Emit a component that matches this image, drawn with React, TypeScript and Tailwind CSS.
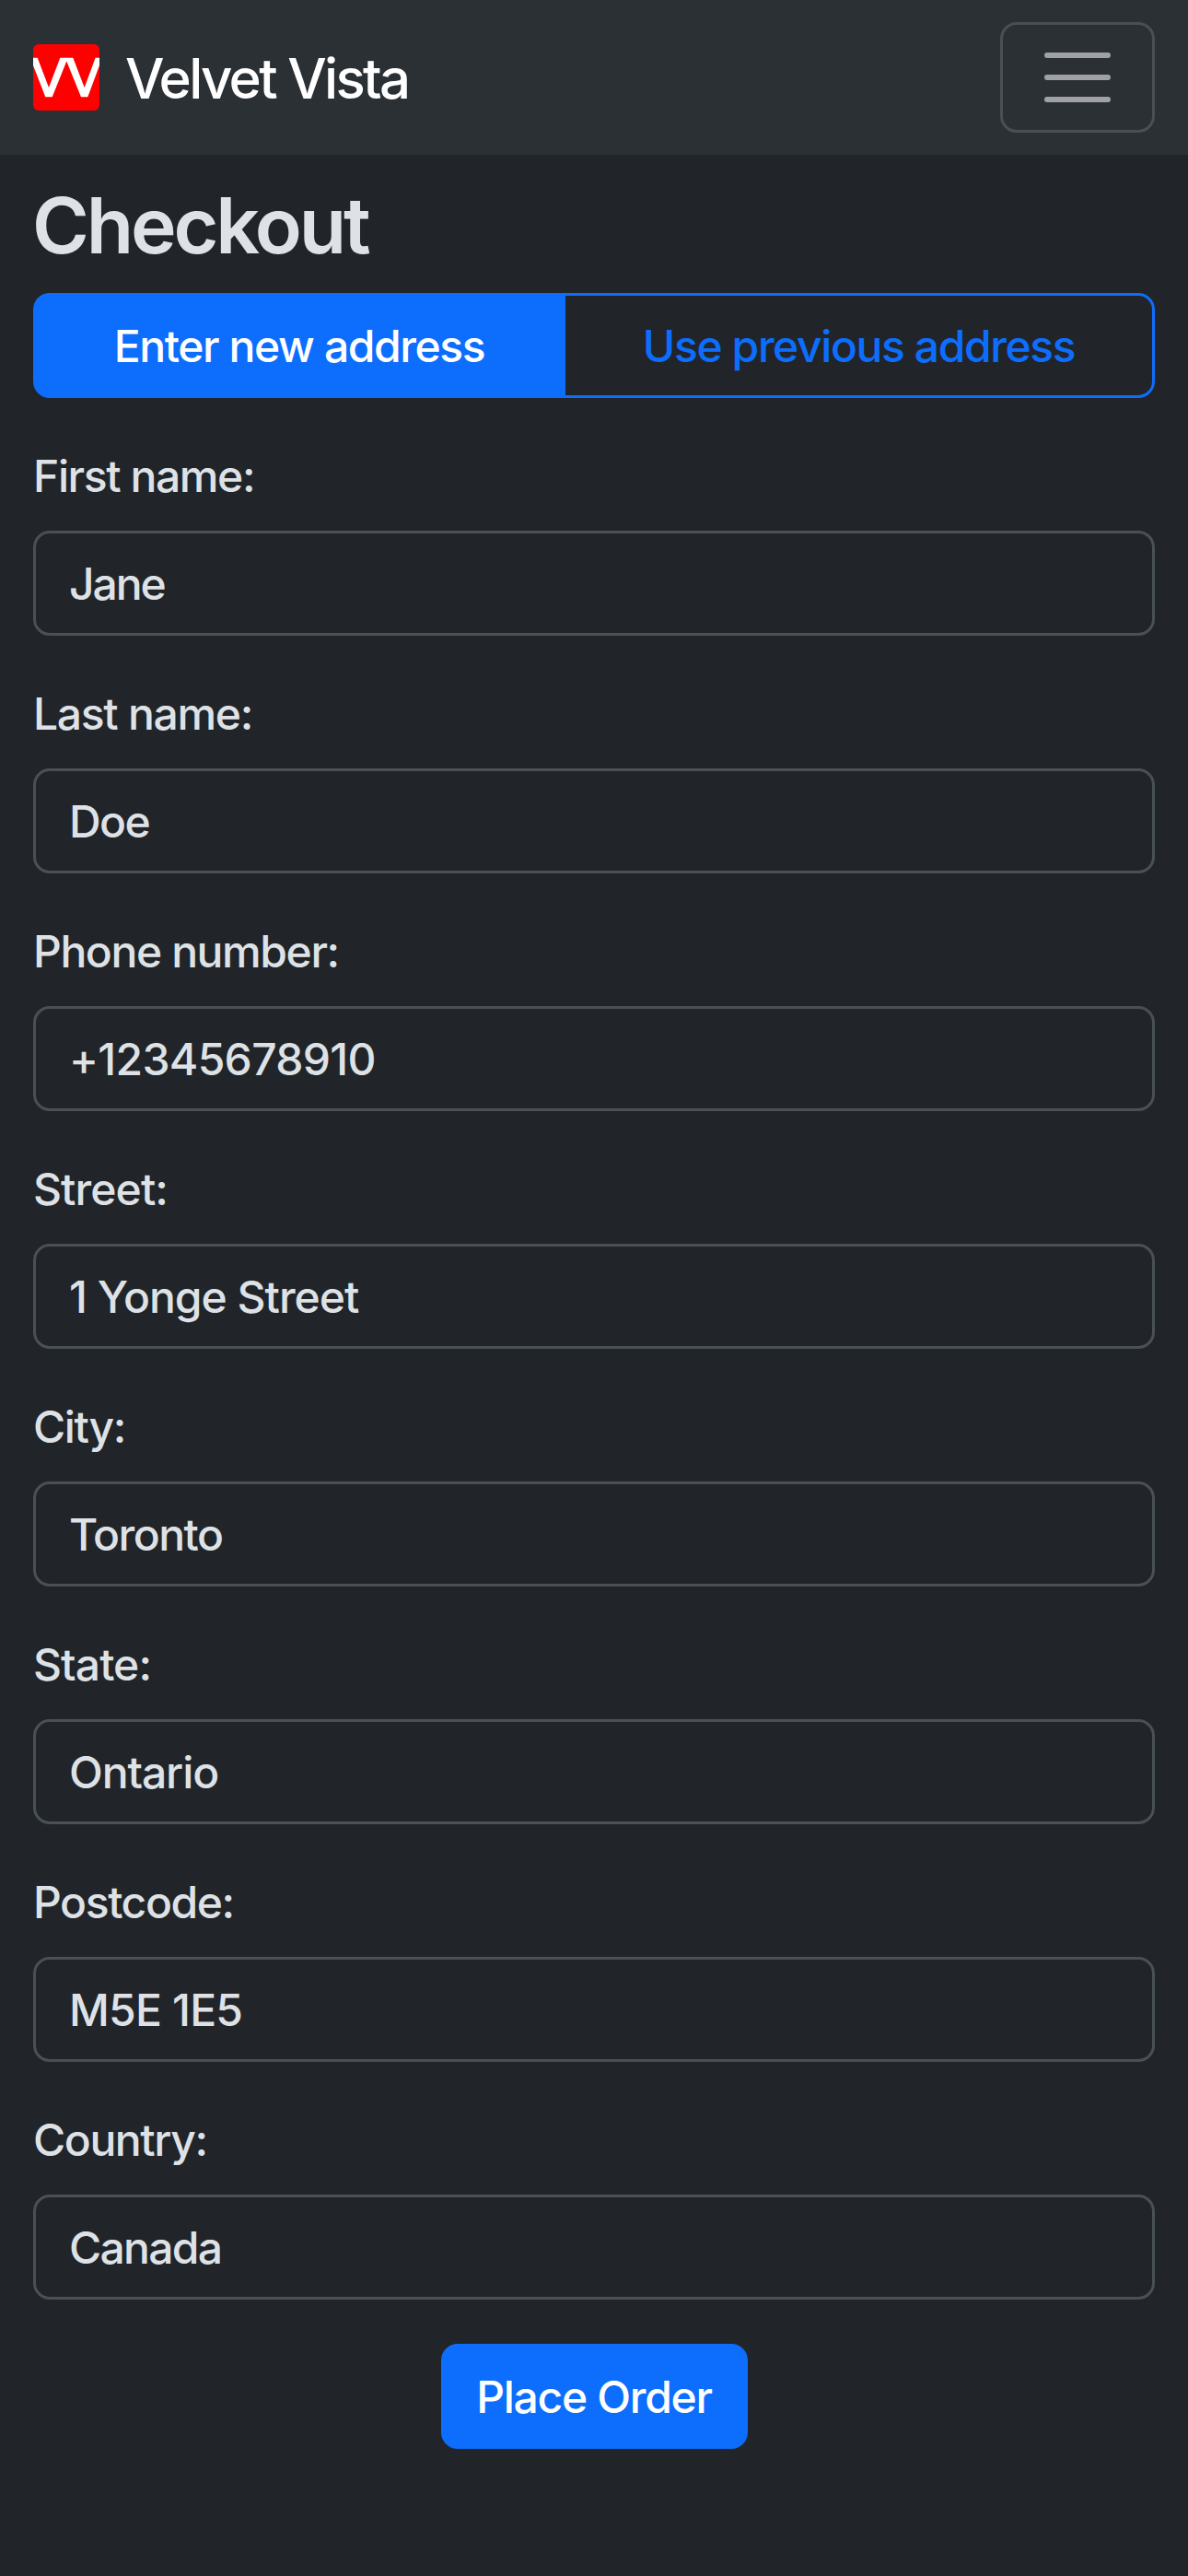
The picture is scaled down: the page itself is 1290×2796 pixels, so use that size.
const fields = [
  { label: 'First name:', value: 'Jane', labelClass: 'tracking-[-1.4px]', valueClass: 'tracking-[-2.1px]' },
  { label: 'Last name:', value: 'Doe', labelClass: 'tracking-[-1.3px]', valueClass: 'tracking-[-1.6px]' },
  { label: 'Phone number:', value: '+12345678910', labelClass: 'tracking-[-1.4px]', valueClass: 'tracking-[-0.7px]' },
  { label: 'Street:', value: '1 Yonge Street', labelClass: 'tracking-[-0.9px]', valueClass: 'tracking-[-1px]' },
  { label: 'City:', value: 'Toronto', labelClass: 'tracking-[-1.4px]', valueClass: 'tracking-[-1.5px]' },
  { label: 'State:', value: 'Ontario', labelClass: 'tracking-[-0.9px]', valueClass: 'tracking-[-1.1px]' },
  { label: 'Postcode:', value: 'M5E 1E5', labelClass: 'tracking-[-1.4px]', valueClass: 'tracking-[-0.8px]' },
  { label: 'Country:', value: 'Canada', labelClass: 'tracking-[-1.4px]', valueClass: 'tracking-[-1.7px]' },
];

export default function App() {
  return (
    <div className="min-h-[2796px] bg-[#212529] font-['Inter',sans-serif] text-[48px] font-[450] leading-[72px] text-[#dee2e6]">
      <header className="flex h-[168px] items-center justify-between bg-[#2b3035] px-9">
        <div className="flex items-center gap-[28px]">
          <svg className="size-[72px] rounded-[6px]" viewBox="0 0 72 72">
            <rect width="72" height="72" fill="#f00" />
            <path
              d="M0 14.7H4.7L17 47L29.3 14.7H43.3L55.7 47L67.6 14.7H72V23L59.3 57.3H52L36.3 18.5L20.7 57.3H13.3L0 23Z"
              fill="#fff"
            />
          </svg>
          <span className="pt-[2px] text-[60px] leading-[90px] tracking-[-2.7px] text-white">Velvet Vista</span>
        </div>
        <button className="flex h-[120px] w-[168px] items-center justify-center rounded-[18px] border-3 border-[#4b4f53]">
          <svg className="size-[90px]" viewBox="0 0 30 30" fill="none" stroke="#9fa1a4" strokeWidth="2" strokeLinecap="round">
            <path d="M4 7h22M4 15h22M4 23h22" />
          </svg>
        </button>
      </header>
      <main className="px-9 pt-[26px]">
        <h1 className="-ml-px mb-[22px] text-[84px] font-[570] leading-[102px] tracking-[-3.2px]">Checkout</h1>
        <div className="flex h-[114px]">
          <button className="w-[578px] rounded-l-[18px] bg-[#0d6efd] pt-[2px] tracking-[-1.4px] text-white">Enter new address</button>
          <button className="flex-1 rounded-r-[18px] border-3 border-l-0 border-[#0d6efd] pt-[2px] tracking-[-1.4px] text-[#0d6efd]">Use previous address</button>
        </div>
        <div className="mt-[48px] flex flex-col gap-[48px]">
          {fields.map(({ label, value, labelClass, valueClass }) => (
            <label key={label} className="block">
              <span className={`mb-[23px] block pt-px ${labelClass}`}>{label}</span>
              <div className="flex h-[114px] items-center rounded-[18px] border-3 border-[#495057] px-9 pt-[2px]">
                <span className={valueClass}>{value}</span>
              </div>
            </label>
          ))}
        </div>
        <button className="mx-auto mt-[48px] block h-[114px] w-[333px] rounded-[18px] bg-[#0d6efd] pt-[2px] tracking-[-1.3px] text-white">Place Order</button>
      </main>
    </div>
  );
}
